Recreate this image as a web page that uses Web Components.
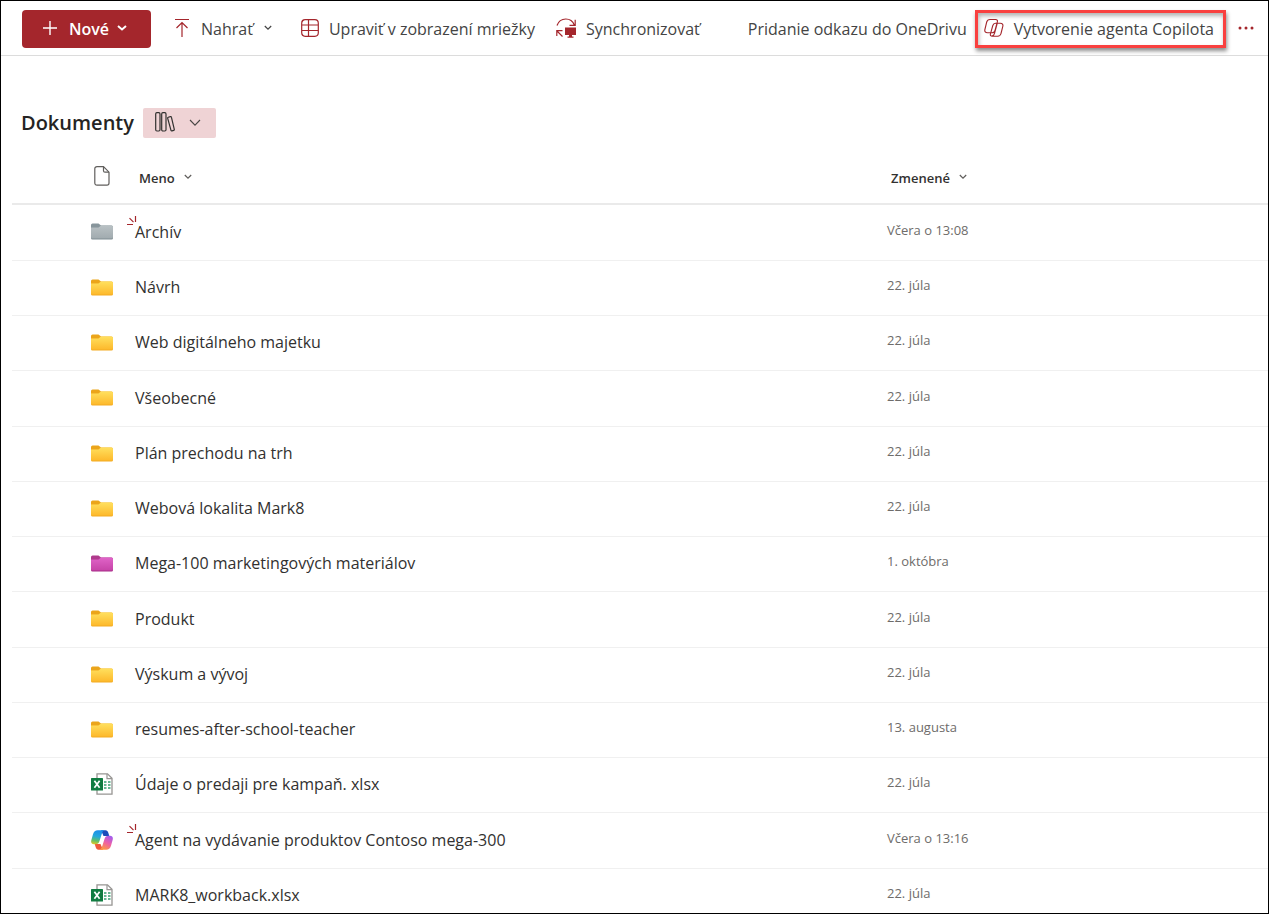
<!DOCTYPE html>
<html lang="sk">
<head>
<meta charset="utf-8">
<title>Dokumenty</title>
<style>
  body { margin: 0; font-family: "Open Sans", "Noto Sans", sans-serif; color: #323130; background: #fff; }
</style>
</head>
<body>
<library-page>
  <command-bar slot="commands">
    <command-item kind="primary" icon="plus" menu>Nové</command-item>
    <command-item icon="upload" menu>Nahrať</command-item>
    <command-item icon="grid">Upraviť v zobrazení mriežky</command-item>
    <command-item icon="sync">Synchronizovať</command-item>
    <command-item kind="spaced">Pridanie odkazu do OneDrivu</command-item>
    <command-item kind="marked" icon="copilot">Vytvorenie agenta Copilota</command-item>
    <command-item kind="more" icon="dots" label="Ďalšie"></command-item>
  </command-bar>
  <library-title slot="title">Dokumenty</library-title>
  <document-list></document-list>
</library-page>

<script>
const ICONS = {
  plus: [16, 16, '<path d="M8 1v14M1 8h14" stroke="currentColor" stroke-width="1.4"/>'],
  upload: [16, 20, '<path d="M1 1.500h14M8 19V4.500M2.500 10 8 4.500l5.500 5.500" stroke="#a4262c" stroke-width="1.200"/>'],
  grid: [18, 18, '<rect x=".7" y=".7" width="16.600" height="16.600" rx="3.500" stroke="#a4262c" stroke-width="1.200"/><path d="M1 6h16M1 11.500h16M7.500 1v16" stroke="#a4262c" stroke-width="1.200"/>'],
  sync: [20, 20, '<path d="M1 7.500C2.500 3.200 6 1 9.800 1c4 0 7 2 8.500 6M19.200 1.800v5.500h-5.700M.8 18v-5.300h5.700M1 13l5.500 5.500" stroke="#a4262c" stroke-width="1.200"/><path d="M9 9.500h11v7.500h-4V18.500h1.500v1.200h-6v-1.200H13V17H9z" fill="#a4262c"/>'],
  copilot: [20, 20, '<path d="M6 1.500h5.700c1.300 0 2 .8 1.700 2.100L11 12.300c-.5 1.700-1.500 2.500-3 2.500H3.500C1.400 14.800.4 13.400.9 11.500L2.700 4C3.100 2.400 4.300 1.500 6 1.500zM13.300 5.200h3c2 0 3 1.300 2.500 3.200L17 15.500c-.4 1.800-1.700 2.700-3.400 2.700H8.200c-1.400 0-2.100-.8-1.800-2.100l2.400-8.600c.4-1.500 1.300-2.300 2.800-2.300zM13.300 5.200l-2.700 9.900c-.4 1.700-1.100 2.700-2.600 3" stroke="#a4262c" stroke-width="1.100"/>'],
  dots: [16, 4, '<circle cx="2" cy="2" r="1.500" fill="#a4262c"/><circle cx="8" cy="2" r="1.500" fill="#a4262c"/><circle cx="14" cy="2" r="1.500" fill="#a4262c"/>'],
  chevron: [8, 6, '<path d="M.8 1l3.200 3.200L7.200 1" stroke="currentColor" stroke-width="1.200"/>'],
  chevronBold: [10, 6, '<path d="M1 1l4 3.500L9 1" stroke="currentColor" stroke-width="2"/>'],
  chevronWide: [12, 8, '<path d="M1 1l5 5.200L11 1" stroke="#484644" stroke-width="1.100"/>'],
  books: [20, 20, '<rect x=".7" y=".7" width="4.300" height="18.300" rx="1.200" stroke="#323130" stroke-width="1.200"/><rect x="6.700" y=".7" width="4.300" height="18.300" rx="1.200" stroke="#323130" stroke-width="1.200"/><path d="M13.200 5.300l2.200-.7c.5-.1.900.1 1 .6l2.900 12.200c.1.500-.1.900-.6 1l-1.700.5c-.5.100-.9-.1-1-.6L12.700 6.300c-.1-.5 0-.9.5-1z" stroke="#323130" stroke-width="1.200"/>'],
  page: [16, 20, '<path d="M3 .7h6.500L15 6.200V17c0 1.300-.8 2.200-2 2.200H3c-1.300 0-2.200-.9-2.200-2.200V2.800C.8 1.500 1.700.7 3 .7z" stroke="#605e5c" stroke-width="1.200"/><path d="M9.500 1v3.700c0 1 .5 1.500 1.500 1.500h4" stroke="#605e5c" stroke-width="1.200"/>'],
  spark: [10, 10, '<path d="M0 8.500h6M2.500 2.200l4 4M8.500 0v6" stroke="#a4262c" stroke-width="1.200"/>'],
  xlsx: [22, 22, '<path d="M6 .8h10.500L21 5.200V21.200H6z" fill="#fff" stroke="#979593" stroke-width="1.300"/><path d="M16 1v4.700h5" stroke="#979593" stroke-width="1.200"/><path d="M13 9h2.500M17 9h2.500M13 12h2.500M17 12h2.500M13 15h2.500M17 15h2.500" stroke="#33a06f" stroke-width="1.400"/><rect y="5" width="12" height="12.500" rx=".6" fill="#107c41"/><path d="M3.400 7.800l5.200 7M8.600 7.800l-5.200 7" stroke="#fff" stroke-width="1.700"/>'],
  agent: [22, 20, '<defs><linearGradient id="b" x1=".3" y1="0" x2=".1" y2="1"><stop offset="0" stop-color="#1c8fe8"/><stop offset=".4" stop-color="#22a8dc"/><stop offset=".7" stop-color="#5fbf6a"/><stop offset="1" stop-color="#f0c81c"/></linearGradient><linearGradient id="p" x1=".8" y1="0" x2=".3" y2="1"><stop offset="0" stop-color="#a05cf0"/><stop offset=".5" stop-color="#ee5fa6"/><stop offset="1" stop-color="#fd9a3f"/></linearGradient></defs><path d="M10 .3h4.500c1.600 0 2.300.9 2.800 2.500l1 3.200h-5.800z" fill="#1a4cbb"/><path d="M12 19.700H7.500c-1.600 0-2.300-.9-2.800-2.500l-1-3.200h5.800z" fill="#ef5a3c"/><path d="M6.800.3h6.700c-1.300.4-2 1.500-2.600 3.200L8.500 11c-.7 2.200-1.800 3.300-4 3.300H3C.8 14.300-.3 12.700.3 10.300l1.700-6C2.800 1.500 4.300.3 6.800.3z" fill="url(#b)"/><path d="M15.200 19.700H8.500c1.300-.4 2-1.500 2.600-3.200L13.500 9c.7-2.200 1.800-3.300 4-3.300H19c2.200 0 3.300 1.600 2.700 4l-1.700 6c-.8 2.800-2.300 4-4.800 4z" fill="url(#p)"/>'],
};
const FOLDERS = {
  yellow: ['#ffe05e', '#fdb92c', '#f3ac22', '#eba51b'],
  grey: ['#b9c1c4', '#a1abaf', '#7f8d93', '#87959b'],
  pink: ['#e064c8', '#c644a8', '#a82c88', '#b03a8c'],
};
for (const [name, [top, bottom, edge, tab]] of Object.entries(FOLDERS)) {
  ICONS[name] = [22, 17, `<defs><linearGradient id="f" x2="0" y2="1"><stop stop-color="${top}"/><stop offset="1" stop-color="${bottom}"/></linearGradient></defs><path d="M0 2Q0 .5 1.500.5H7.500L10 2.500V6H0z" fill="${tab}"/><path d="M0 4.500H7.500L10 2.500H20.500Q22 2.500 22 4V15Q22 16.500 20.500 16.500H1.500Q0 16.500 0 15z" fill="${edge}"/><path d="M0 4.500H7.500L10 2.500H20.500Q22 2.500 22 4V14Q22 15.500 20.500 15.500H1.500Q0 15.500 0 14z" fill="url(#f)"/>`];
}

class UiIcon extends HTMLElement {
  connectedCallback() {
    const [w, h, body] = ICONS[this.getAttribute('name')];
    this.attachShadow({ mode: 'open' }).innerHTML =
      `<style>:host{display:inline-flex;flex:none}svg{display:block}</style>
       <svg width="${w}" height="${h}" viewBox="0 0 ${w} ${h}" fill="none" aria-hidden="true">${body}</svg>`;
  }
}
customElements.define('ui-icon', UiIcon);

class CommandItem extends HTMLElement {
  connectedCallback() {
    const icon = this.getAttribute('icon');
    const primary = this.getAttribute('kind') === 'primary';
    const label = this.getAttribute('label');
    this.attachShadow({ mode: 'open' }).innerHTML = `
      <style>
        :host { display: block; flex: none; }
        :host([menu]) { margin-right: 8px; }
        button { display: flex; align-items: center; box-sizing: border-box; height: 38px; gap: 10px; padding: 0;
          border: 0; background: none; font: inherit; font-size: 16px; line-height: 24px; color: #444; white-space: nowrap; }
        :host([menu]) button { gap: 11px; }
        .icon { margin-bottom: 2px; }
        .chevron { margin-bottom: 3px; }
        :host([kind="primary"]) { margin-right: 2px; }
        :host([kind="primary"]) button { background: #a4262c; color: #fff; border-radius: 4px; font-weight: 600; padding: 0 24px 0 20px; }
        :host([kind="primary"]) .chevron { margin-left: -3px; }
        :host([kind="spaced"]) { margin-left: 27px; }
        :host([kind="marked"]) { margin-left: -13px; }
        :host([kind="marked"]) button { border: 3px solid #f9403f; padding: 0 9px 0 6px; box-shadow: 1px 3px 4px rgba(0,0,0,.45), inset 1px 3px 4px rgba(0,0,0,.3); }
        :host([kind="more"]) { margin-left: -9px; }
      </style>
      <button type="button" ${label ? `aria-label="${label}"` : ''}>
        ${icon ? `<ui-icon class="icon" name="${icon}"></ui-icon>` : ''}<slot></slot>
        ${this.hasAttribute('menu') ? `<ui-icon class="chevron" name="${primary ? 'chevronBold' : 'chevron'}"></ui-icon>` : ''}
      </button>`;
  }
}
customElements.define('command-item', CommandItem);

class CommandBar extends HTMLElement {
  connectedCallback() {
    this.attachShadow({ mode: 'open' }).innerHTML = `
      <style>
        :host { display: flex; align-items: center; gap: 21px; height: 52px; padding: 2px 0 0 21px; border-bottom: 1px solid #dcdcdc; }
      </style>
      <slot></slot>`;
  }
}
customElements.define('command-bar', CommandBar);

class LibraryTitle extends HTMLElement {
  connectedCallback() {
    this.attachShadow({ mode: 'open' }).innerHTML = `
      <style>
        :host { display: flex; align-items: center; gap: 9px; padding: 52px 20px 0; }
        h1 { margin: 0; font-size: 20px; line-height: 30px; font-weight: 600; color: #252423; }
        button { display: flex; align-items: center; gap: 14px; height: 30px; padding: 0 15px 0 12px; border: 0; border-radius: 2px; background: #efd3d5; }
        ui-icon:first-child { margin-bottom: 2px; }
      </style>
      <h1><slot></slot></h1>
      <button type="button" aria-label="Zobrazenie knižnice"><ui-icon name="books"></ui-icon><ui-icon name="chevronWide"></ui-icon></button>`;
  }
}
customElements.define('library-title', LibraryTitle);

const FILES = [
  ['grey', 'Archív', 'Včera o 13:08', true],
  ['yellow', 'Návrh', '22. júla'],
  ['yellow', 'Web digitálneho majetku', '22. júla'],
  ['yellow', 'Všeobecné', '22. júla'],
  ['yellow', 'Plán prechodu na trh', '22. júla'],
  ['yellow', 'Webová lokalita Mark8', '22. júla'],
  ['pink', 'Mega-100 marketingových materiálov', '1. októbra'],
  ['yellow', 'Produkt', '22. júla'],
  ['yellow', 'Výskum a vývoj', '22. júla'],
  ['yellow', 'resumes-after-school-teacher', '13. augusta'],
  ['xlsx', 'Údaje o predaji pre kampaň. xlsx', '22. júla'],
  ['agent', 'Agent na vydávanie produktov Contoso mega-300', 'Včera o 13:16', true],
  ['xlsx', 'MARK8_workback.xlsx', '22. júla'],
];

class DocumentList extends HTMLElement {
  connectedCallback() {
    const rows = FILES.map(([icon, name, date, fresh]) => `
      <tr><td class="type"><ui-icon name="${icon}"></ui-icon></td>
      <td class="name">${fresh ? '<ui-icon class="spark" name="spark"></ui-icon>' : ''}<a href="#">${name}</a></td>
      <td class="date">${date}</td></tr>`).join('');
    this.attachShadow({ mode: 'open' }).innerHTML = `
      <style>
        :host { display: block; padding: 13px 0 0 11px; }
        table { width: 100%; table-layout: fixed; border-collapse: separate; border-spacing: 0; }
        .c-type { width: 123px; }
        .c-date { width: 381px; }
        th, td { box-sizing: border-box; padding: 0; text-align: left; vertical-align: middle; }
        th { height: 54px; border-bottom: 2px solid #eaeaea; }
        th button { display: inline-flex; align-items: center; gap: 9px; padding: 0 4px; border: 0; background: none;
          font: inherit; font-size: 13px; line-height: 20px; font-weight: 600; color: #323130; }
        th button ui-icon { margin-bottom: 2px; color: #605e5c; }
        td { height: 55px; border-bottom: 1px solid #f0f0f0; }
        tr:nth-child(4n) td, tr:first-child td { height: 56px; }
        .type { padding: 0 0 2px 79px; }
        .type ui-icon { display: flex; }
        th.type { padding-left: 82px; }
        td.name { position: relative; padding-bottom: 2px; }
        a { font-size: 16px; line-height: 24px; color: #323130; text-decoration: none; }
        td.date { font-size: 13px; line-height: 20px; color: #6e6c6a; padding-bottom: 6px; }
        .spark { position: absolute; left: -8px; top: 11px; }
      </style>
      <table>
        <colgroup><col class="c-type"><col><col class="c-date"></colgroup>
        <thead><tr>
          <th class="type" aria-label="Typ"><ui-icon name="page"></ui-icon></th>
          <th><button type="button">Meno <ui-icon name="chevron"></ui-icon></button></th>
          <th><button type="button">Zmenené <ui-icon name="chevron"></ui-icon></button></th>
        </tr></thead>
        <tbody>${rows}</tbody>
      </table>`;
  }
}
customElements.define('document-list', DocumentList);

class LibraryPage extends HTMLElement {
  connectedCallback() {
    this.attachShadow({ mode: 'open' }).innerHTML = `
      <style>
        :host { display: block; box-sizing: border-box; height: 100vh; overflow: hidden; border: 1px solid #000; }
      </style>
      <header><slot name="commands"></slot></header>
      <main><slot name="title"></slot><slot></slot></main>`;
  }
}
customElements.define('library-page', LibraryPage);
</script>
</body>
</html>
